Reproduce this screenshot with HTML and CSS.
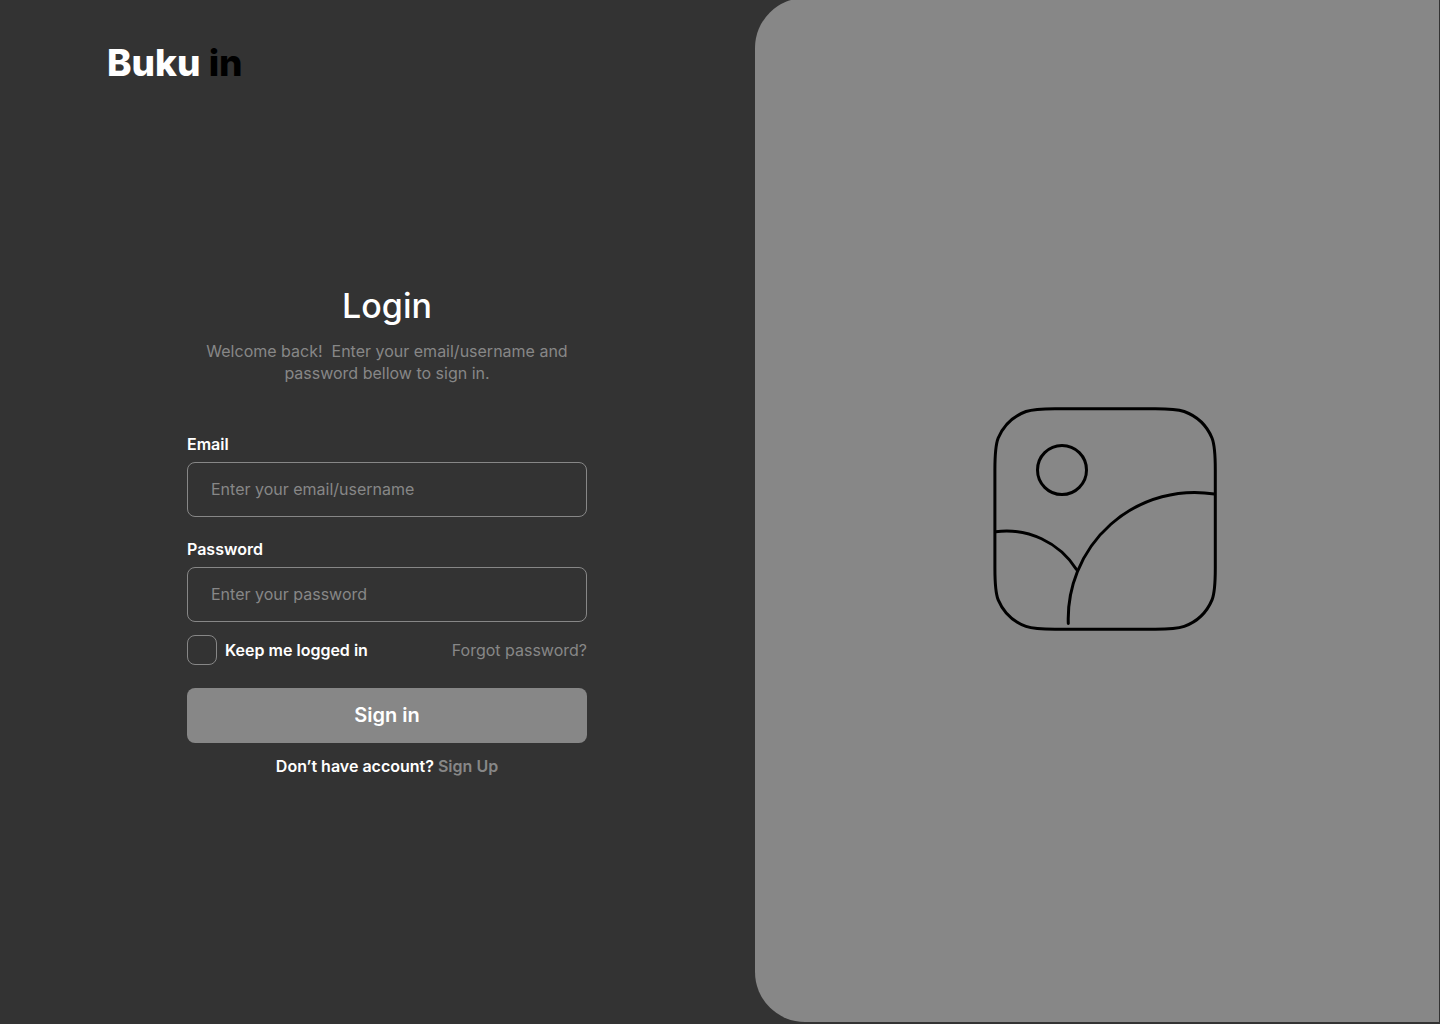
FILE: index.html
```html
<!DOCTYPE html>
<html lang="en">
<head>
<meta charset="utf-8">
<meta name="viewport" content="width=device-width, initial-scale=1">
<title>Login</title>
<link rel="stylesheet" href="styles.css">
</head>
<body>
<div class="page">
  <div class="side">
    <header class="header"><span class="logo">Buku <span class="logo-dark">in</span></span></header>
    <main class="main">
      <form class="form">
        <h1 class="title">Login</h1>
        <p class="intro">Welcome back!&nbsp; Enter your email/username and password bellow to sign in.</p>
        <div class="field">
          <label class="label" for="email">Email</label>
          <input class="input" id="email" type="text" placeholder="Enter your email/username">
        </div>
        <div class="field">
          <label class="label" for="password">Password</label>
          <input class="input" id="password" type="password" placeholder="Enter your password">
        </div>
        <div class="options">
          <label class="keep" for="keep"><input class="check" id="keep" type="checkbox">Keep me logged in</label>
          <a class="link" href="#">Forgot password?</a>
        </div>
        <button class="submit" type="submit">Sign in</button>
        <p class="signup">Don’t have account? <a class="link" href="#">Sign Up</a></p>
      </form>
    </main>
  </div>
  <aside class="panel">
    <svg class="picture" viewBox="0 0 250 250" fill="none" stroke="#000" stroke-width="3" stroke-linecap="round" aria-hidden="true">
      <path d="M75 13.7H175.2C188.2 13.7 196.7 13.9 204.2 16.5A48 48 0 0 1 232 43C235 50.5 235.3 62 235.3 75V172.9C235.3 185.9 235 197.4 232 204.9A48 48 0 0 1 204.2 231.4C196.7 234 188.2 234.2 175.2 234.2H75C62 234.2 53.500 234 46 231.4A48 48 0 0 1 18.2 204.9C15.200 197.4 14.9 185.9 14.9 172.9V75C14.9 62 15.2 50.5 18.2 43A48 48 0 0 1 46 16.5C53.5 13.9 62 13.7 75 13.7Z"/>
      <circle cx="82" cy="75" r="24.5"/>
      <path d="M88.3 228.5A126.5 126.5 0 0 1 234.5 99"/>
      <path d="M15.5 136.7A83 83 0 0 1 96.5 174.5"/>
    </svg>
  </aside>
</div>
</body>
</html>
```
FILE: styles.css
```css
* { box-sizing: border-box; }
body {
  margin: 0;
  background: #333;
  color: #fff;
  font: 400 16px/22px Inter, "Liberation Sans", sans-serif;
}
.page {
  display: grid;
  grid-template-columns: 755fr 685fr;
  min-height: 100vh;
  overflow: hidden;
}
.side { display: flex; flex-direction: column; }
.header { padding: 39px 107px 0; }
.logo { display: block; font-size: 37px; line-height: 48px; font-weight: 800; }
.logo-dark { color: #000; }
.main {
  flex: 1;
  display: flex;
  align-items: center;
  justify-content: center;
  padding: 0 0 53px 19px;
}
.form { width: 100%; max-width: 400px; }
.title {
  margin: 0 0 10px;
  font-size: 34px;
  line-height: 48px;
  font-weight: 500;
  text-align: center;
}
.intro { margin: 0 0 50px; padding: 0 16px; color: #878787; text-align: center; }
.field { display: flex; flex-direction: column; gap: 8px; }
.field + .field { margin-top: 22px; }
.label { line-height: 20px; font-weight: 600; }
.input {
  width: 100%;
  height: 55px;
  padding: 0 23px;
  border: 1px solid #878787;
  border-radius: 8px;
  background: transparent;
  color: #fff;
  font: inherit;
}
.input::placeholder { color: #878787; opacity: 1; }
.options {
  display: flex;
  align-items: center;
  justify-content: space-between;
  margin: 13px 0 23px;
}
.keep { display: flex; align-items: center; gap: 8px; font-weight: 600; }
.check {
  appearance: none;
  width: 30px;
  height: 30px;
  margin: 0;
  border: 1px solid #878787;
  border-radius: 8px;
}
.check:checked { background: #878787; }
.link { color: #878787; text-decoration: none; }
.submit {
  display: block;
  width: 100%;
  height: 55px;
  border: 0;
  border-radius: 8px;
  background: #878787;
  color: #fff;
  font: inherit;
  font-size: 20px;
  font-weight: 600;
}
.signup { margin: 12px 0 0; text-align: center; font-weight: 600; }
.panel {
  display: flex;
  align-items: center;
  justify-content: center;
  margin: -2px 1px 2px 0;
  padding: 20px 0 0 16px;
  border-radius: 50px 0 0 50px;
  background: #878787;
}
.picture { width: 250px; height: 250px; }
```
